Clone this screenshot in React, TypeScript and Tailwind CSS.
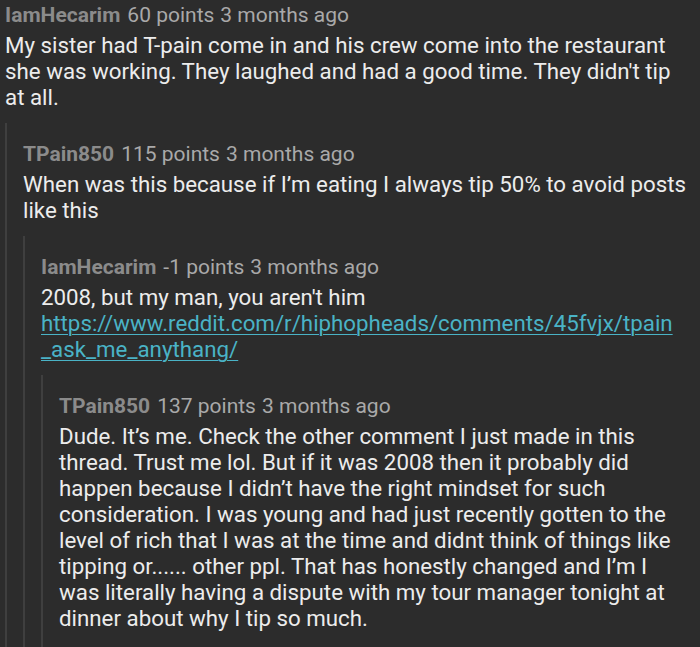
import React from "react";

interface Comment {
  user: string;
  points: string;
  age: string;
  body: React.ReactNode;
  reply?: Comment;
}

const thread: Comment = {
  user: "IamHecarim",
  points: "60 points",
  age: "3 months ago",
  body: "My sister had T-pain come in and his crew come into the restaurant she was working. They laughed and had a good time. They didn't tip at all.",
  reply: {
    user: "TPain850",
    points: "115 points",
    age: "3 months ago",
    body: "When was this because if I\u2019m eating I always tip 50% to avoid posts like this",
    reply: {
      user: "IamHecarim",
      points: "-1 points",
      age: "3 months ago",
      body: (
        <>
          2008, but my man, you aren't him
          <br />
          <a
            href="#"
            className="text-[#4ab3c6] underline underline-offset-[3px] decoration-1"
          >
            https://www.reddit.com/r/hiphopheads/comments/45fvjx/tpain
            <br />
            _ask_me_anythang/
          </a>
        </>
      ),
      reply: {
        user: "TPain850",
        points: "137 points",
        age: "3 months ago",
        body: "Dude. It\u2019s me. Check the other comment I just made in this thread. Trust me lol. But if it was 2008 then it probably did happen because I didn\u2019t have the right mindset for such consideration. I was young and had just recently gotten to the level of rich that I was at the time and didnt think of things like tipping or...... other ppl. That has honestly changed and I\u2019m I was literally having a dispute with my tour manager tonight at dinner about why I tip so much.",
      },
    },
  },
};

function CommentBlock({ c }: { c: Comment }) {
  return (
    <div>
      <div className="h-[24px] leading-[24px] text-[21px] whitespace-nowrap">
        <span className="font-bold text-[#8b8b8b]">{c.user}</span>
        <span className="text-[#a9a9a9] ml-[7px]">{c.points}</span>
        <span className="text-[#a9a9a9] ml-[6px]">{c.age}</span>
      </div>
      <div className="mt-[5px] text-[22.3px] leading-[26px] text-[#ececec]">
        {c.body}
      </div>
      {c.reply ? (
        <div className="mt-[13px] border-l-2 border-[#3f3f3f] pl-4 pt-[19px]">
          <CommentBlock c={c.reply} />
        </div>
      ) : (
        <div className="h-[80px]" />
      )}
    </div>
  );
}

export default function App() {
  return (
    <div
      className="w-[700px] h-[647px] overflow-hidden bg-[#2c2c2c] pl-[5px] pr-[10px] pt-[3px]"
      style={{ fontFamily: "Roboto, 'Noto Sans', sans-serif" }}
    >
      <CommentBlock c={thread} />
    </div>
  );
}
